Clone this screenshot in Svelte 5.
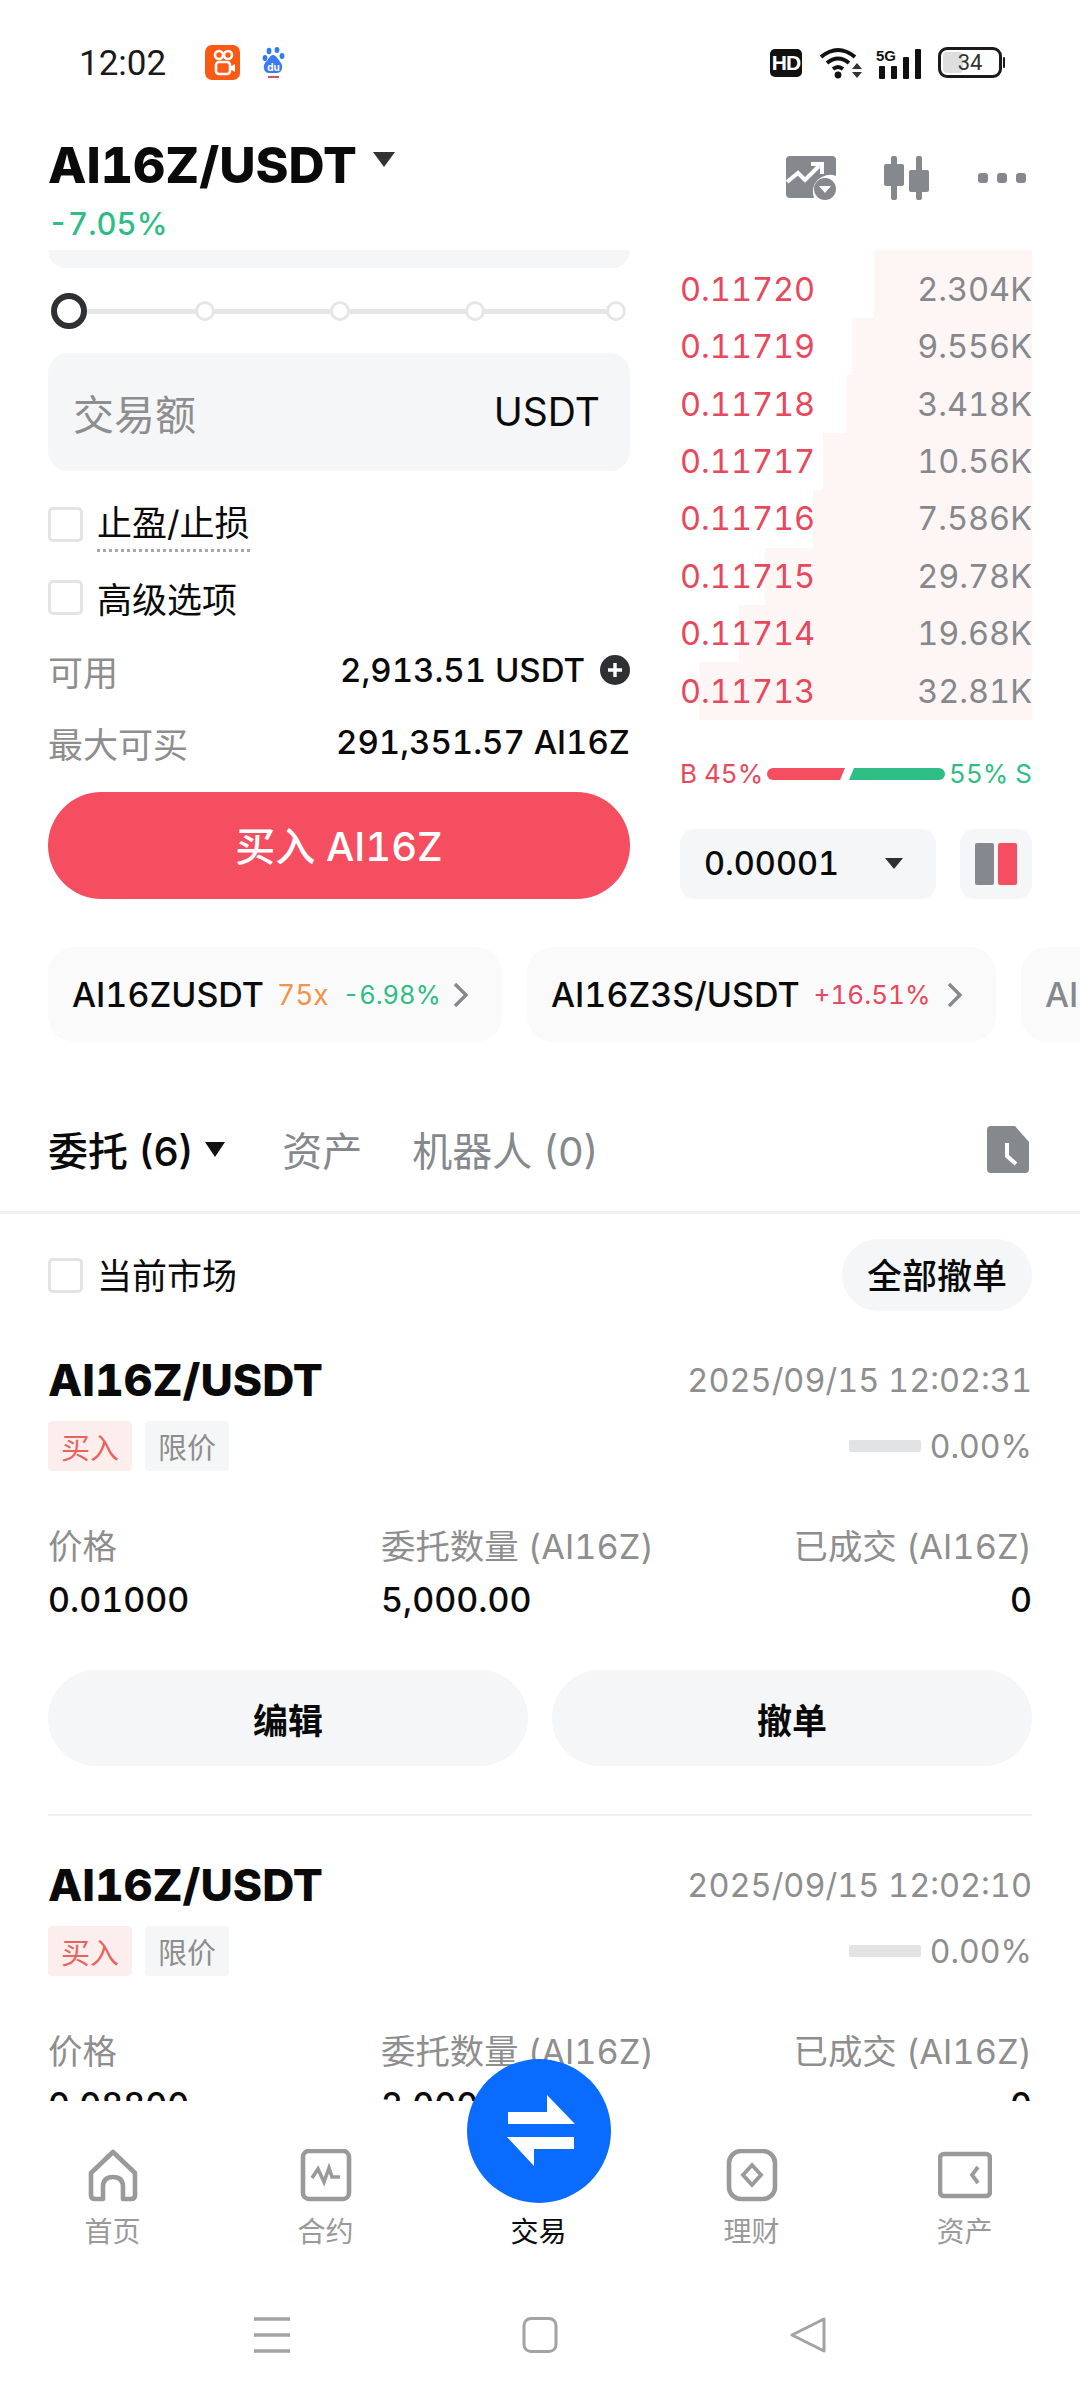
<script>
	const book = [
		{ price: '0.11720', size: '2.304K', left: 194 },
		{ price: '0.11719', size: '9.556K', left: 172 },
		{ price: '0.11718', size: '3.418K', left: 166 },
		{ price: '0.11717', size: '10.56K', left: 143 },
		{ price: '0.11716', size: '7.586K', left: 133 },
		{ price: '0.11715', size: '29.78K', left: 85 },
		{ price: '0.11714', size: '19.68K', left: 59 },
		{ price: '0.11713', size: '32.81K', left: 19 }
	];

	const orders = [
		{ time: '2025/09/15 12:02:31', price: '0.01000', qty: '5,000.00' },
		{ time: '2025/09/15 12:02:10', price: '0.08800', qty: '2,000.00' }
	];
</script>

<div class="phone">
	<div class="status">
		<span class="time">12:02</span>
		<svg class="ks" viewBox="0 0 35 35">
			<rect width="35" height="35" rx="7" fill="#fa5a14" />
			<circle cx="14" cy="10" r="4" fill="none" stroke="#fff" stroke-width="2.6" />
			<circle cx="23" cy="10" r="4" fill="none" stroke="#fff" stroke-width="2.6" />
			<rect x="11" y="17" width="14" height="12" rx="3" fill="none" stroke="#fff" stroke-width="2.6" />
			<path d="M25 22l5-3v8l-5-3z" fill="#fff" />
		</svg>
		<svg class="baidu" viewBox="0 0 25 32">
			<ellipse cx="7" cy="4" rx="2.4" ry="3.2" fill="#2f7bf0" />
			<ellipse cx="15" cy="3" rx="2.4" ry="3" fill="#2f7bf0" />
			<ellipse cx="3" cy="11" rx="2.4" ry="3" fill="#2f7bf0" />
			<ellipse cx="20" cy="9" rx="2.4" ry="3" fill="#2f7bf0" />
			<path d="M11 8c3 0 5 4 8 8 3 5 0 10-4 10H7c-4 0-7-5-4-10 3-3 5-8 8-8z" fill="#3d7bf2" />
			<text x="11.5" y="24" class="du">du</text>
			<rect x="6" y="29" width="11" height="2" fill="#c9556e" />
		</svg>
		<div class="spacer"></div>
		<span class="hd">HD</span>
		<svg class="wifi" viewBox="0 0 44 34">
			<path d="M3 11q17-14 34 0M9 17q11-9 22 0M15 23q5-4 10 0" fill="none" stroke="#111" stroke-width="4" />
			<circle cx="20" cy="29" r="3.4" fill="#111" />
			<path d="M39 17l5 6H34zM34 26h10l-5 6z" fill="#333" />
		</svg>
		<svg class="signal" viewBox="0 0 46 32">
			<text x="0" y="14" class="fiveg">5G</text>
			<rect x="3" y="19" width="6" height="13" rx="1" fill="#111" />
			<rect x="15" y="19" width="6" height="13" rx="1" fill="#111" />
			<rect x="27" y="10" width="6" height="22" rx="1" fill="#111" />
			<rect x="39" y="2" width="6" height="30" rx="1" fill="#111" />
		</svg>
		<div class="battery"><span class="fill"></span><span class="level">34</span></div>
		<span class="nub"></span>
	</div>

	<div class="header">
		<div class="title-wrap">
			<div class="pair">
				<span class="pair-name">AI16Z/USDT</span>
				<svg class="pair-arrow" viewBox="0 0 24 15"><path d="M1 0h22L12 15z" fill="#333" /></svg>
			</div>
			<div class="change">-7.05%</div>
		</div>
		<div class="head-icons">
			<svg class="head-chart" viewBox="0 0 52 44">
				<path d="M4 0h42a4 4 0 0 1 4 4v16a17 17 0 0 0-22 22H4a4 4 0 0 1-4-4V4a4 4 0 0 1 4-4z" fill="#85888c" />
				<path d="M1 26l11-9 7 7 14-14" fill="none" stroke="#fff" stroke-width="4" />
				<path d="M25 8h11v10" fill="none" stroke="#fff" stroke-width="4" />
				<circle cx="39" cy="33" r="11" fill="#85888c" />
				<path d="M33 30h12l-6 7z" fill="#fff" />
			</svg>
			<svg class="head-candle" viewBox="0 0 46 44">
				<rect x="7" y="0" width="6" height="44" rx="2" fill="#85888c" />
				<rect x="0" y="8" width="20" height="22" rx="2" fill="#85888c" />
				<rect x="32" y="0" width="6" height="44" rx="2" fill="#85888c" />
				<rect x="25" y="14" width="20" height="22" rx="2" fill="#85888c" />
			</svg>
			<div class="dots"><span></span><span></span><span></span></div>
		</div>
	</div>

	<main class="main">
		<section class="trade">
			<div class="form">
				<div class="clipped"></div>
				<div class="slider">
					<span class="track"></span>
					<span class="knob active"></span>
					<span class="knob"></span>
					<span class="knob"></span>
					<span class="knob"></span>
					<span class="knob"></span>
				</div>
				<div class="amount">
					<span class="placeholder">交易额</span>
					<span class="unit">USDT</span>
				</div>
				<label class="check first">
					<span class="box"></span>
					<span class="dotted">止盈/止损</span>
				</label>
				<label class="check second">
					<span class="box"></span>
					<span>高级选项</span>
				</label>
				<div class="info avail">
					<span class="info-label">可用</span>
					<span class="info-value">
						2,913.51 USDT
						<svg class="plus" viewBox="0 0 30 30">
							<circle cx="15" cy="15" r="15" fill="#2e3033" />
							<path d="M15 8v14M8 15h14" stroke="#fff" stroke-width="3.4" />
						</svg>
					</span>
				</div>
				<div class="info max">
					<span class="info-label">最大可买</span>
					<span class="info-value">291,351.57 AI16Z</span>
				</div>
				<button class="buy">买入 AI16Z</button>
			</div>

			<div class="side">
				<div class="book">
					{#each book as row, i}
						<div class="book-row" class:top={i === 0}>
							<span class="depth" style="left: {row.left}px"></span>
							<span class="price">{row.price}</span>
							<span class="size">{row.size}</span>
						</div>
					{/each}
				</div>
				<div class="ratio">
					<span class="ratio-buy">B 45%</span>
					<svg class="ratio-bar" viewBox="0 0 178 12">
						<path d="M6 0H78L73 12H6a6 6 0 0 1 0-12z" fill="#f44e60" />
						<path d="M87 0H172a6 6 0 0 1 0 12H82z" fill="#2ebd85" />
					</svg>
					<span class="ratio-sell">55% S</span>
				</div>
				<div class="controls">
					<div class="tick">
						<span>0.00001</span>
						<svg class="tick-arrow" viewBox="0 0 20 12"><path d="M1 0h18l-9 11z" fill="#2e3033" /></svg>
					</div>
					<div class="mode"><span class="mode-gray"></span><span class="mode-red"></span></div>
				</div>
			</div>
		</section>

		<section class="chips">
			<div class="chip one">
				<span class="chip-name">AI16ZUSDT</span>
				<span class="lev">75x</span>
				<span class="down">-6.98%</span>
				<svg class="chev" viewBox="0 0 18 26"><path d="M3 2l11 11L3 24" fill="none" stroke="#85888c" stroke-width="3.4" /></svg>
			</div>
			<div class="chip two">
				<span class="chip-name">AI16Z3S/USDT</span>
				<span class="up">+16.51%</span>
				<svg class="chev" viewBox="0 0 18 26"><path d="M3 2l11 11L3 24" fill="none" stroke="#85888c" stroke-width="3.4" /></svg>
			</div>
			<div class="chip three"><span class="chip-name faded">AI16Z</span></div>
		</section>

		<section class="tabs">
			<span class="tab current">委托 (6)</span>
			<svg class="tab-arrow" viewBox="0 0 20 15"><path d="M0 0h20L10 15z" fill="#111" /></svg>
			<span class="tab assets">资产</span>
			<span class="tab bots">机器人 (0)</span>
			<svg class="doc" viewBox="0 0 42 47">
				<path d="M4 0h24l14 16v27a4 4 0 0 1-4 4H4a4 4 0 0 1-4-4V4a4 4 0 0 1 4-4z" fill="#85888c" />
				<path d="M20 17v13l9 8" fill="none" stroke="#fff" stroke-width="4" />
			</svg>
		</section>

		<section class="market">
			<label class="check">
				<span class="box"></span>
				<span class="lift">当前市场</span>
			</label>
			<button class="cancel-all">全部撤单</button>
		</section>

		{#each orders as order}
			<article class="order">
				<div class="order-top">
					<span class="order-pair">AI16Z/USDT</span>
					<span class="order-time">{order.time}</span>
				</div>
				<div class="order-tags">
					<span class="tag buy-tag">买入</span>
					<span class="tag limit-tag">限价</span>
					<span class="progress"></span>
					<span class="percent">0.00%</span>
				</div>
				<div class="order-grid labels">
					<span>价格</span>
					<span>委托数量 (AI16Z)</span>
					<span class="end">已成交 (AI16Z)</span>
				</div>
				<div class="order-grid values">
					<span>{order.price}</span>
					<span>{order.qty}</span>
					<span class="end">0</span>
				</div>
				<div class="order-actions">
					<button>编辑</button>
					<button>撤单</button>
				</div>
			</article>
		{/each}
	</main>

	<nav class="tabbar">
		<button class="swap" aria-label="交易">
			<svg viewBox="0 0 144 144">
				<path d="M80 36l28 29H41V53h39z" fill="#fff" />
				<path d="M40 78h67v12H67v17z" fill="#fff" />
			</svg>
		</button>
		<div class="nav-item">
			<svg viewBox="0 0 54 54">
				<path d="M27 3L49 24V46Q49 50 45 50H37V38Q37 28 27 28Q17 28 17 38V50H9Q5 50 5 46V24Z" fill="none" stroke="#9a9a9a" stroke-width="4.6" stroke-linejoin="round" />
			</svg>
			<span>首页</span>
		</div>
		<div class="nav-item">
			<svg viewBox="0 0 54 54">
				<rect x="4" y="2" width="46" height="48" rx="6" fill="none" stroke="#9a9a9a" stroke-width="4.6" />
				<path d="M13 29l6-9 6 13 5-14 3 9h8" fill="none" stroke="#9a9a9a" stroke-width="3.6" />
			</svg>
			<span>合约</span>
		</div>
		<div class="nav-item active">
			<div class="nav-gap"></div>
			<span>交易</span>
		</div>
		<div class="nav-item">
			<svg viewBox="0 0 54 54">
				<rect x="4" y="2" width="46" height="48" rx="12" fill="none" stroke="#9a9a9a" stroke-width="4.6" />
				<path d="M27 16l9 10-9 10-9-10z" fill="none" stroke="#9a9a9a" stroke-width="3.8" />
			</svg>
			<span>理财</span>
		</div>
		<div class="nav-item">
			<svg viewBox="0 0 54 54">
				<rect x="2" y="5" width="50" height="42" rx="4" fill="none" stroke="#9a9a9a" stroke-width="4.6" />
				<path d="M40 18l-6 8 6 8" fill="none" stroke="#9a9a9a" stroke-width="3.8" />
			</svg>
			<span>资产</span>
		</div>
	</nav>

	<div class="system">
		<svg viewBox="0 0 38 36"><path d="M1 2h36M1 18h36M1 34h36" stroke="#a3a3a3" stroke-width="3.4" /></svg>
		<svg viewBox="0 0 38 36"><rect x="3" y="1.5" width="32" height="33" rx="7" fill="none" stroke="#a3a3a3" stroke-width="3" /></svg>
		<svg viewBox="0 0 38 36"><path d="M35 2v32L3 18z" fill="none" stroke="#a3a3a3" stroke-width="3" stroke-linejoin="round" /></svg>
	</div>
</div>

<style>
	:global(body) {
		background: #fff;
		margin: 0;
	}

	.phone {
		color: #0a0a0a;
		display: flex;
		flex-direction: column;
		font-family: Inter, "Noto Sans CJK SC", sans-serif;
		font-variant-numeric: tabular-nums;
		height: 2400px;
		overflow: hidden;
		position: relative;
		width: 1080px;
	}

	button {
		border: none;
		color: inherit;
		font-family: inherit;
		font-variant-numeric: inherit;
	}

	/* status bar */
	.status {
		align-items: center;
		box-sizing: border-box;
		display: flex;
		flex: none;
		height: 125px;
		padding: 0 75px 0 79px;
	}

	.time {
		color: #1a1a1a;
		font-family: Roboto, sans-serif;
		font-size: 35px;
		margin: 2px 39px 0 0;
	}

	.ks {
		height: 35px;
		margin-right: 22px;
		width: 35px;
	}

	.baidu {
		height: 32px;
		width: 25px;
	}

	.du {
		fill: #fff;
		font-size: 10px;
		font-weight: 700;
		text-anchor: middle;
	}

	.spacer {
		flex: 1;
	}

	.hd {
		align-items: center;
		background: #111;
		border-radius: 5px;
		color: #fff;
		display: flex;
		font-family: "Liberation Sans", sans-serif;
		font-size: 21px;
		font-weight: 700;
		height: 28px;
		justify-content: center;
		letter-spacing: -1px;
		width: 32px;
	}

	.wifi {
		height: 34px;
		margin-left: 16px;
		width: 44px;
	}

	.signal {
		height: 32px;
		margin-left: 14px;
		overflow: visible;
		width: 46px;
	}

	.fiveg {
		fill: #111;
		font-family: "Liberation Sans", sans-serif;
		font-size: 15px;
		font-weight: 700;
	}

	.battery {
		align-items: center;
		border: 3px solid #1a1a1a;
		border-radius: 9px;
		box-sizing: border-box;
		display: flex;
		height: 31px;
		justify-content: center;
		margin-left: 16px;
		position: relative;
		width: 64px;
	}

	.fill {
		background: #dedede;
		border-radius: 4px;
		bottom: 2px;
		left: 2px;
		position: absolute;
		top: 2px;
		width: 20px;
	}

	.level {
		color: #333;
		font-family: Roboto, sans-serif;
		font-size: 22px;
		position: relative;
	}

	.nub {
		background: #1a1a1a;
		border-radius: 1px;
		height: 11px;
		margin-left: 1px;
		width: 2px;
	}

	/* pair header */
	.header {
		display: flex;
		flex: none;
		height: 125px;
		justify-content: space-between;
		padding: 0 54px 0 48px;
	}

	.pair {
		align-items: center;
		display: flex;
		height: 80px;
	}

	.pair-name {
		font-size: 50px;
		font-weight: 800;
	}

	.pair-arrow {
		height: 15px;
		margin: -12px 0 0 15px;
		width: 24px;
	}

	.change {
		color: #2ebd85;
		font-size: 31px;
		font-weight: 500;
		line-height: 40px;
		margin-top: -1px;
	}

	.head-icons {
		align-items: center;
		display: flex;
		height: 44px;
		margin-top: 31px;
	}

	.head-chart {
		height: 44px;
		width: 52px;
	}

	.head-candle {
		height: 44px;
		margin-left: 46px;
		width: 46px;
	}

	.dots {
		display: flex;
		gap: 9px;
		margin-left: 48px;
	}

	.dots span {
		background: #85888c;
		border-radius: 3px;
		height: 10px;
		width: 10px;
	}

	/* scrolled page area */
	.main {
		flex: none;
		height: 1851px;
		overflow: hidden;
	}

	.trade {
		display: grid;
		gap: 50px;
		grid-template-columns: 582px 352px;
		padding: 0 48px;
	}

	.clipped {
		background: #f5f6f7;
		border-radius: 0 0 20px 20px;
		height: 18px;
	}

	.slider {
		align-items: center;
		display: flex;
		height: 36px;
		margin-top: 25px;
		position: relative;
	}

	.track {
		background: #e6e6e6;
		height: 5px;
		left: 5px;
		position: absolute;
		right: 10px;
	}

	.knob {
		background: #fff;
		border: 3px solid #e6e6e6;
		border-radius: 50%;
		box-sizing: border-box;
		height: 20px;
		margin-left: 115px;
		position: relative;
		width: 20px;
	}

	.knob.active {
		border: 6px solid #2e3033;
		height: 36px;
		margin-left: 3px;
		width: 36px;
	}

	.knob.active + .knob {
		margin-left: 108px;
	}

	.knob:last-child {
		margin-left: 121px;
	}

	.amount {
		align-items: center;
		background: #f5f6f7;
		border-radius: 20px;
		box-sizing: border-box;
		display: flex;
		height: 118px;
		justify-content: space-between;
		margin-top: 24px;
		padding: 0 30px 1px 25px;
	}

	.placeholder {
		color: #8e8e8e;
		font-size: 41px;
	}

	.unit {
		font-size: 39px;
	}

	.check {
		align-items: center;
		display: flex;
		font-size: 35px;
		gap: 14px;
		height: 36px;
	}

	.check.first {
		margin-top: 35px;
	}

	.check.second {
		margin-top: 37px;
	}

	.box {
		border: 3px solid #e4e4e4;
		border-radius: 5px;
		box-sizing: border-box;
		height: 35px;
		width: 35px;
	}

	.dotted {
		align-self: flex-start;
		border-bottom: 3px dotted #a8a8a8;
		line-height: 34px;
		padding-bottom: 9px;
	}

	.lift {
		padding-bottom: 4px;
	}

	.info {
		align-items: center;
		display: flex;
		height: 40px;
		justify-content: space-between;
	}

	.info.avail {
		margin-top: 35px;
	}

	.info.max {
		margin-top: 32px;
	}

	.info-label {
		color: #8e8e8e;
		font-size: 35px;
	}

	.info-value {
		align-items: center;
		display: flex;
		font-size: 33px;
		font-weight: 500;
	}

	.plus {
		height: 30px;
		margin-left: 15px;
		width: 30px;
	}

	.buy {
		background: #f44e60;
		border-radius: 54px;
		color: #fff;
		display: block;
		font-size: 40px;
		font-weight: 500;
		height: 107px;
		margin-top: 30px;
		padding: 0 0 3px;
		width: 100%;
	}

	.book-row {
		align-items: center;
		display: flex;
		font-size: 32.5px;
		height: 57.4px;
		justify-content: space-between;
		position: relative;
	}

	.book-row.top {
		box-sizing: border-box;
		height: 68px;
		padding-top: 11px;
	}

	.depth {
		background: #fef6f5;
		bottom: 0;
		position: absolute;
		right: 0;
		top: 0;
	}

	.price {
		color: #e8485c;
		position: relative;
	}

	.size {
		color: #85888c;
		position: relative;
	}

	.ratio {
		align-items: center;
		display: flex;
		font-size: 26px;
		height: 30px;
		justify-content: space-between;
		margin-top: 39px;
	}

	.ratio-buy {
		color: #e8485c;
	}

	.ratio-sell {
		color: #2ebd85;
	}

	.ratio-bar {
		height: 12px;
		width: 178px;
	}

	.controls {
		display: flex;
		justify-content: space-between;
		margin-top: 40px;
	}

	.tick {
		align-items: center;
		background: #f5f6f7;
		border-radius: 14px;
		box-sizing: border-box;
		display: flex;
		font-size: 32.5px;
		font-weight: 500;
		height: 70px;
		justify-content: space-between;
		padding: 0 32px 0 24px;
		width: 256px;
	}

	.tick-arrow {
		height: 12px;
		width: 20px;
	}

	.mode {
		align-items: center;
		background: #f5f6f7;
		border-radius: 14px;
		display: flex;
		gap: 4px;
		height: 70px;
		justify-content: center;
		width: 72px;
	}

	.mode-gray,
	.mode-red {
		border-radius: 2px;
		height: 42px;
		width: 19px;
	}

	.mode-gray {
		background: #85888c;
	}

	.mode-red {
		background: #f44e60;
	}

	/* related markets */
	.chips {
		display: flex;
		gap: 25px;
		margin-top: 48px;
		padding-left: 48px;
	}

	.chip {
		align-items: center;
		background: #fafafa;
		border-radius: 26px;
		box-sizing: border-box;
		display: flex;
		flex: none;
		height: 95px;
		padding: 0 32px 0 24px;
	}

	.chip.one {
		width: 454px;
	}

	.chip.two {
		width: 469px;
	}

	.chip.three {
		width: 200px;
	}

	.chip-name {
		font-size: 34px;
		font-weight: 500;
	}

	.faded {
		color: #85888c;
	}

	.lev {
		color: #f0954a;
		font-size: 28px;
		margin-left: 13px;
	}

	.down {
		color: #2ebd85;
		font-size: 25.5px;
		margin-left: 14px;
	}

	.up {
		color: #e8485c;
		font-size: 26px;
		margin-left: 14px;
	}

	.chev {
		height: 26px;
		margin-left: auto;
		width: 18px;
	}

	/* order tabs */
	.tabs {
		align-items: center;
		border-bottom: 3px solid #f0f0f0;
		display: flex;
		font-size: 40px;
		height: 72px;
		margin-top: 71px;
		padding: 0 51px 26px 48px;
	}

	.tab {
		color: #85888c;
		font-variant-numeric: normal;
	}

	.tab.current {
		color: #0a0a0a;
		font-weight: 500;
	}

	.tab-arrow {
		height: 15px;
		margin-left: 12px;
		width: 20px;
	}

	.tab.assets {
		margin-left: 57px;
	}

	.tab.bots {
		margin-left: 50px;
	}

	.doc {
		height: 47px;
		margin-left: auto;
		width: 42px;
	}

	.market {
		align-items: center;
		display: flex;
		height: 72px;
		justify-content: space-between;
		margin-top: 25px;
		padding: 0 48px;
	}

	.cancel-all {
		background: #f5f6f7;
		border-radius: 36px;
		font-size: 35px;
		font-weight: 500;
		height: 72px;
		padding: 0 0 4px;
		width: 190px;
	}

	/* order card */
	.order {
		border-bottom: 2px solid #f2f2f2;
		margin: 0 48px;
		padding: 49px 0 48px;
	}

	.order-top {
		align-items: center;
		display: flex;
		height: 40px;
		justify-content: space-between;
	}

	.order-pair {
		font-size: 44.5px;
		font-weight: 800;
	}

	.order-time {
		color: #8e8e8e;
		font-size: 32.5px;
	}

	.order-tags {
		align-items: center;
		display: flex;
		height: 50px;
		margin-top: 21px;
	}

	.tag {
		align-items: center;
		border-radius: 4px;
		display: flex;
		font-size: 29px;
		height: 50px;
		justify-content: center;
		width: 84px;
	}

	.buy-tag {
		background: #fdeeee;
		color: #e8635c;
	}

	.limit-tag {
		background: #f5f6f7;
		color: #8e8e8e;
		margin-left: 13px;
	}

	.progress {
		background: #e2e3e4;
		border-radius: 2px;
		height: 12px;
		margin-left: auto;
		width: 72px;
	}

	.percent {
		color: #8e8e8e;
		font-size: 32px;
		margin-left: 9px;
	}

	.order-grid {
		align-items: center;
		display: grid;
		grid-template-columns: 333px 1fr auto;
		height: 40px;
	}

	.end {
		text-align: right;
	}

	.labels {
		color: #8e8e8e;
		font-size: 34.4px;
		margin-top: 48px;
	}

	.values {
		font-size: 34px;
		font-weight: 500;
		margin-top: 20px;
	}

	.order-actions {
		display: grid;
		gap: 24px;
		grid-template-columns: 1fr 1fr;
		margin-top: 51px;
	}

	.order-actions button {
		background: #f5f6f7;
		border-radius: 48px;
		font-size: 35px;
		font-weight: 700;
		height: 96px;
	}

	/* bottom tab bar */
	.tabbar {
		background: #fff;
		box-sizing: border-box;
		display: grid;
		flex: none;
		grid-template-columns: repeat(5, 213px);
		height: 166px;
		padding: 48px 0 0 6px;
		position: relative;
	}

	.swap {
		background: #0a6cff;
		border-radius: 50%;
		height: 144px;
		left: 467px;
		padding: 0;
		position: absolute;
		top: -42px;
		width: 144px;
	}

	.swap svg {
		display: block;
	}

	.nav-item {
		align-items: center;
		color: #9a9a9a;
		display: flex;
		flex-direction: column;
		font-size: 28px;
	}

	.nav-item svg,
	.nav-gap {
		height: 54px;
		width: 54px;
	}

	.nav-item span {
		line-height: 40px;
		margin-top: 9px;
	}

	.nav-item.active {
		color: #0a0a0a;
	}

	.system {
		align-items: center;
		display: flex;
		gap: 230px;
		justify-content: center;
		margin-top: 50px;
	}

	.system svg {
		height: 36px;
		width: 38px;
	}
</style>
